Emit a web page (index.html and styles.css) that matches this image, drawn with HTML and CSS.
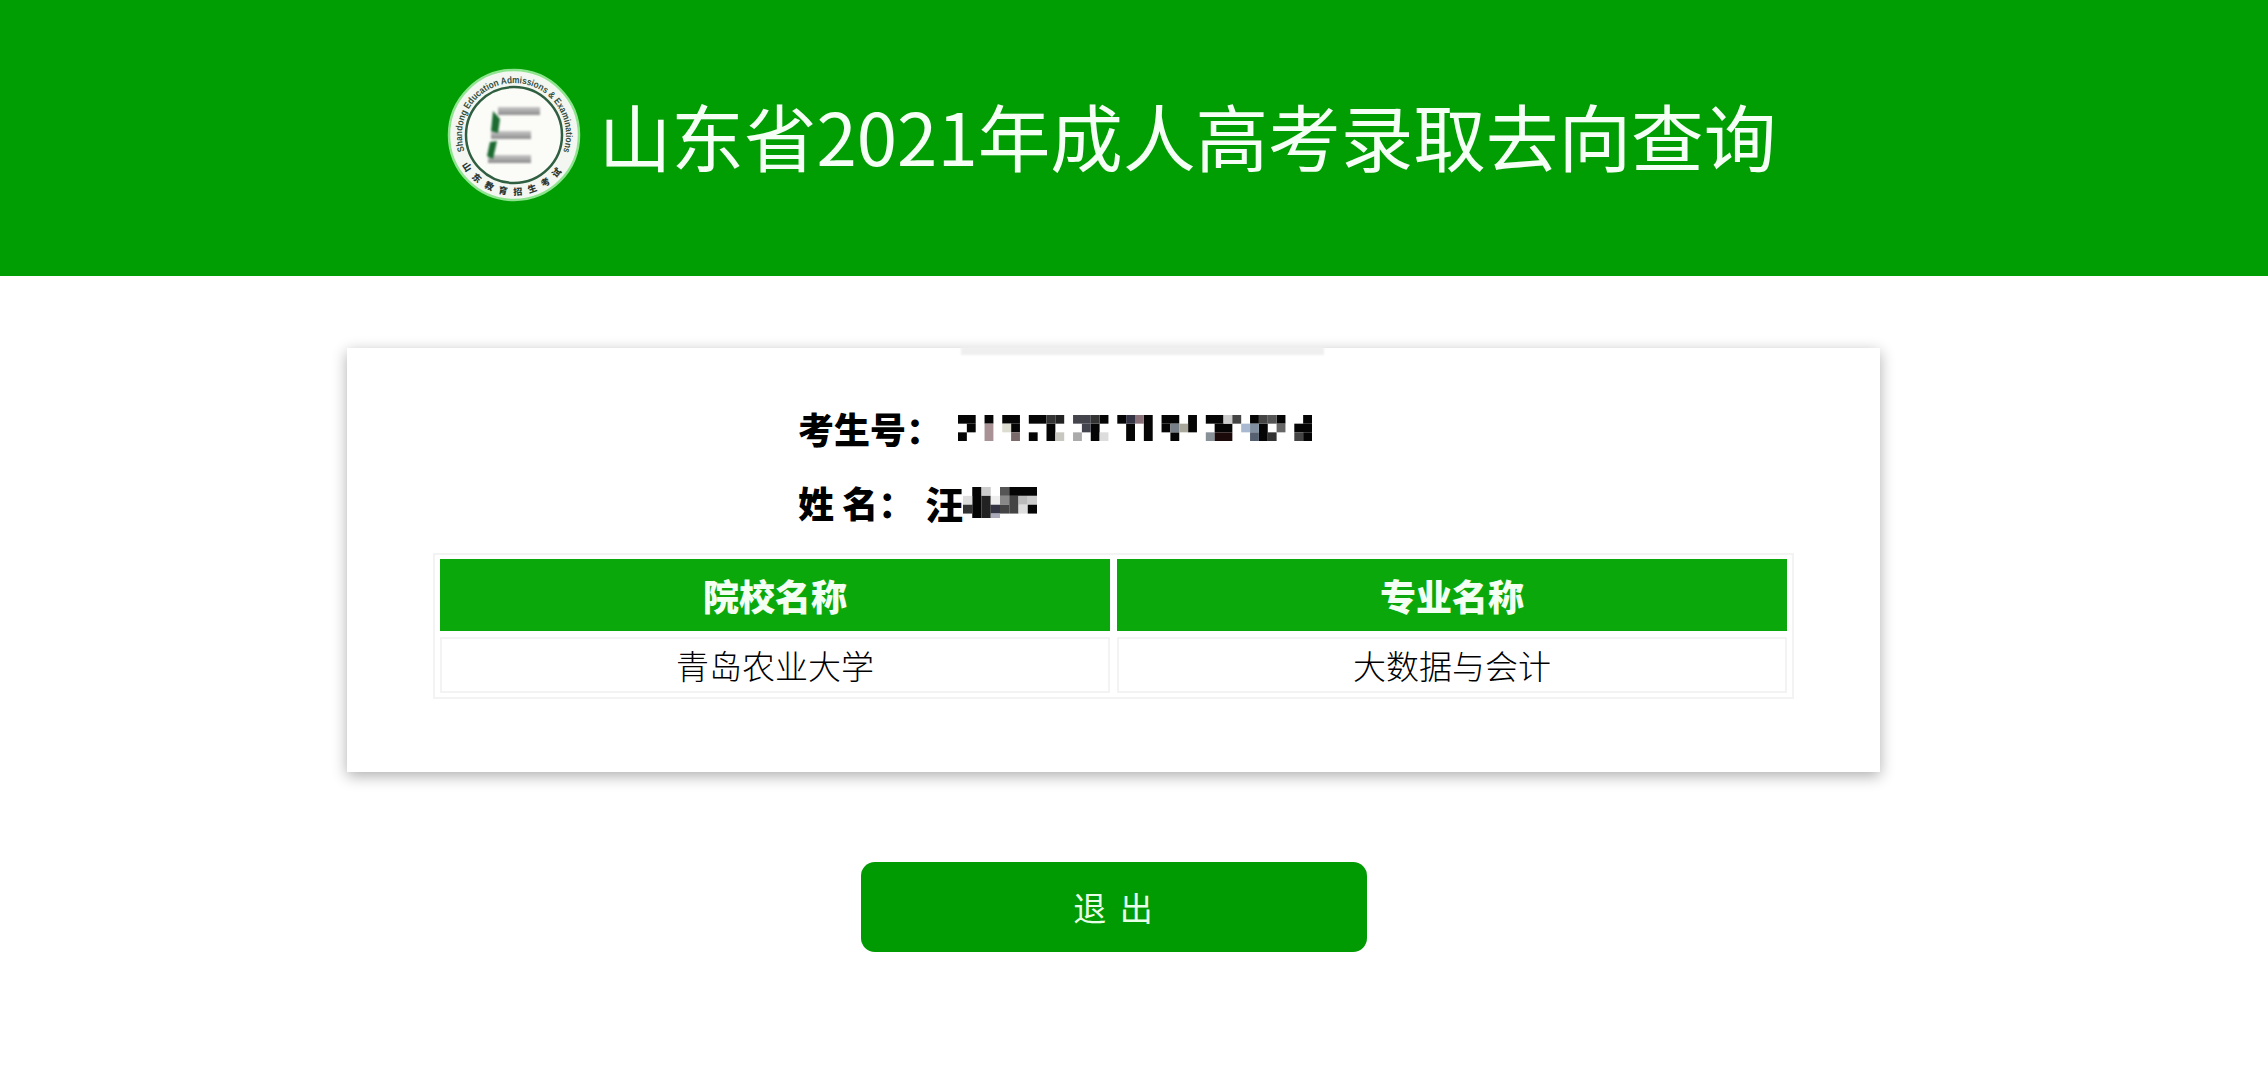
FILE: index.html
```html
<!DOCTYPE html>
<html lang="zh-CN">

<head>
    <meta charset="UTF-8">
    <title>山东省2021年成人高考录取去向查询</title>
    <link rel="stylesheet" href="styles.css">
</head>

<body>
    <header class="banner">
        <svg class="logo" viewBox="0 0 140 142" width="140" height="142">
            <defs>
                <path id="arcTop" d="M 21.5 87 A 52 52 0 1 1 120.5 87"></path>
                <path id="arcBottom" d="M 19 101 A 60 60 0 0 0 123 101"></path>
                <linearGradient id="barGrey" x1="0" y1="0" x2="0" y2="1">
                    <stop offset="0" stop-color="#c8c8c8"></stop>
                    <stop offset="1" stop-color="#8c8c8c"></stop>
                </linearGradient>
            </defs>
            <circle cx="71" cy="71" r="65" fill="#f4f6f2" stroke="#8fe58f" stroke-width="2.5"></circle>
            <circle cx="71" cy="71" r="48" fill="#fbfbf8" stroke="#2f5f40" stroke-width="2.5"></circle>
            <text class="logo-en"><textPath href="#arcTop" textLength="196" lengthAdjust="spacingAndGlyphs">Shandong Education Admissions &amp; Examinations</textPath></text>
            <text class="logo-cn"><textPath href="#arcBottom" textLength="118">山东教育招生考试</textPath></text>
            <g class="logo-e">
                <rect x="55" y="43" width="42" height="8" fill="url(#barGrey)"></rect>
                <rect x="48" y="67" width="40" height="8" fill="url(#barGrey)"></rect>
                <rect x="45" y="91" width="43" height="8" fill="url(#barGrey)"></rect>
                <path d="M50 47 L57 55 L55 69 L48 67 Z" fill="#1c6b30"></path>
                <path d="M47 78 L54 77 L50 95 L44 92 Z" fill="#1c6b30"></path>
            </g>
        </svg>
        <h1 class="title">山东省2021年成人高考录取去向查询</h1>
    </header>

    <main class="content">
        <section class="card">
            <div class="card-tab"></div>
            <div class="info-row">
                <span class="info-label">考生号：</span>
                <svg class="mosaic mosaic-id" viewBox="0 0 40 3" preserveAspectRatio="none">
                    <g fill="#050505">
                        <rect x="0" y="0" width="2" height="1"></rect>
                        <rect x="1" y="1" width="1" height="1"></rect>
                        <rect x="0" y="2" width="1" height="1"></rect>
                        <rect x="3" y="0" width="1" height="1"></rect>
                        <rect x="5" y="0" width="2" height="1"></rect>
                        <rect x="6" y="1" width="1" height="1"></rect>
                        <rect x="8" y="0" width="2" height="1"></rect>
                        <rect x="8" y="2" width="1" height="1"></rect>
                        <rect x="10" y="1" width="1" height="2"></rect>
                        <rect x="16" y="0" width="1" height="1"></rect>
                        <rect x="15" y="1" width="1" height="2"></rect>
                        <rect x="18" y="0" width="1" height="1"></rect>
                        <rect x="19" y="1" width="1" height="2"></rect>
                        <rect x="21" y="0" width="1" height="3"></rect>
                        <rect x="23" y="0" width="2" height="1"></rect>
                        <rect x="23" y="1" width="1" height="1"></rect>
                        <rect x="24" y="2" width="1" height="1"></rect>
                        <rect x="26" y="0" width="1" height="2"></rect>
                        <rect x="28" y="0" width="2" height="1"></rect>
                        <rect x="29" y="1" width="2" height="1"></rect>
                        <rect x="33" y="0" width="1" height="1"></rect>
                        <rect x="34" y="1" width="1" height="2"></rect>
                        <rect x="36" y="0" width="1" height="1"></rect>
                        <rect x="38" y="1" width="2" height="1"></rect>
                        <rect x="39" y="0" width="1" height="1"></rect>
                        <rect x="39" y="2" width="1" height="1"></rect>
                    </g>
                    <rect x="3" y="1" width="1" height="2" fill="#a89295"></rect>
                    <rect x="5" y="1" width="1" height="1" fill="#dcdcd0"></rect>
                    <rect x="6" y="2" width="1" height="1" fill="#7a6a6a"></rect>
                    <rect x="10" y="0" width="1" height="1" fill="#333"></rect>
                    <rect x="11" y="0" width="1" height="1" fill="#222"></rect>
                    <rect x="11" y="2" width="1" height="1" fill="#c8c8c0"></rect>
                    <rect x="13" y="0" width="2" height="1" fill="#44444c"></rect>
                    <rect x="15" y="0" width="1" height="1" fill="#333"></rect>
                    <rect x="14" y="1" width="1" height="1" fill="#44444f"></rect>
                    <rect x="13" y="2" width="1" height="1" fill="#aaa"></rect>
                    <rect x="16" y="2" width="1" height="1" fill="#ddd"></rect>
                    <rect x="19" y="0" width="1" height="1" fill="#334"></rect>
                    <rect x="20" y="0" width="1" height="1" fill="#8a7078"></rect>
                    <rect x="24" y="1" width="1" height="1" fill="#778088"></rect>
                    <rect x="25" y="1" width="1" height="1" fill="#aaa89a"></rect>
                    <rect x="28" y="2" width="1" height="1" fill="#889098"></rect>
                    <rect x="29" y="2" width="2" height="1" fill="#1a0a0a"></rect>
                    <rect x="30" y="0" width="1" height="1" fill="#ccc"></rect>
                    <rect x="31" y="0" width="1" height="1" fill="#444"></rect>
                    <rect x="32" y="1" width="1" height="1" fill="#a8b8d0"></rect>
                    <rect x="33" y="1" width="1" height="1" fill="#8090a0"></rect>
                    <rect x="33" y="2" width="1" height="1" fill="#556070"></rect>
                    <rect x="34" y="0" width="1" height="1" fill="#444"></rect>
                    <rect x="35" y="0" width="1" height="1" fill="#555"></rect>
                    <rect x="35" y="2" width="1" height="1" fill="#333"></rect>
                    <rect x="36" y="1" width="1" height="1" fill="#666"></rect>
                    <rect x="38" y="2" width="1" height="1" fill="#444"></rect>
                </svg>
            </div>
            <div class="info-row">
                <span class="info-label">姓 名：</span>
                <span class="info-value">汪</span>
                <svg class="mosaic mosaic-name" viewBox="0 0 8 3.5" preserveAspectRatio="none">
                    <rect x="1" y="0" width="1" height="3.5" fill="#050505"></rect>
                    <rect x="2" y="0" width="1" height="1" fill="#ccc"></rect>
                    <rect x="4" y="0" width="1" height="1" fill="#555"></rect>
                    <rect x="5" y="0" width="3" height="1" fill="#050505"></rect>
                    <rect x="0" y="1" width="1" height="1" fill="#ddd"></rect>
                    <rect x="2" y="1" width="1" height="2.5" fill="#222"></rect>
                    <rect x="3" y="1" width="1" height="1" fill="#eee"></rect>
                    <rect x="4" y="1" width="1" height="1" fill="#888"></rect>
                    <rect x="5" y="1" width="1" height="2" fill="#444"></rect>
                    <rect x="6" y="1" width="1" height="1" fill="#bbb"></rect>
                    <rect x="7" y="1" width="1" height="1" fill="#ccc"></rect>
                    <rect x="0" y="2" width="1" height="1" fill="#333"></rect>
                    <rect x="3" y="2" width="1" height="1" fill="#334"></rect>
                    <rect x="3" y="3" width="1" height="0.5" fill="#aab"></rect>
                    <rect x="4" y="2" width="1" height="1" fill="#444"></rect>
                    <rect x="6" y="2" width="1" height="1" fill="#ddd"></rect>
                    <rect x="7" y="2" width="1" height="1" fill="#050505"></rect>
                </svg>
            </div>
            <table class="result">
                <thead>
                    <tr>
                        <th>院校名称</th>
                        <th>专业名称</th>
                    </tr>
                </thead>
                <tbody>
                    <tr>
                        <td>青岛农业大学</td>
                        <td>大数据与会计</td>
                    </tr>
                </tbody>
            </table>
        </section>
        <button class="btn-exit" type="button">退 出</button>
    </main>
</body>

</html>
```

FILE: styles.css
```css
* {
    box-sizing: border-box;
}
body {
    margin: 0;
    background-color: #fff;
    font-family: "Noto Sans CJK SC", "Noto Sans", sans-serif;
    color: #000;
}
.banner {
    height: 276px;
    padding: 0 396px 6px 347px;
    display: flex;
    align-items: center;
    justify-content: center;
    gap: 16px;
    background-color: #009e03;
}
.logo {
    flex-shrink: 0;
}
.logo-en {
    font-family: "Liberation Sans", sans-serif;
    font-size: 9.5px;
    font-weight: bold;
    fill: #34503f;
}
.logo-cn {
    font-family: "Noto Sans CJK SC", sans-serif;
    font-size: 9px;
    font-weight: 900;
    fill: #2c3832;
}
.logo-e {
    filter: blur(.8px);
}
.title {
    margin: 0;
    font-size: 72.6px;
    font-weight: 400;
    line-height: 1.2;
    color: #f6fff6;
    white-space: nowrap;
}
.content {
    padding: 72px 388px 0 347px;
    display: flex;
    flex-direction: column;
    align-items: center;
}
.card {
    position: relative;
    width: 1533px;
    padding: 43px 86px 73px;
    background-color: #fff;
    box-shadow: 0 4px 14px rgba(0, 0, 0, .32);
}
.card-tab {
    position: absolute;
    top: -1px;
    left: 614px;
    width: 363px;
    height: 8px;
    background-color: #efefef;
    filter: blur(1px);
}
.info-row {
    height: 74px;
    padding-left: 365px;
    display: flex;
    align-items: center;
    font-size: 36px;
    font-weight: 900;
}
.info-label {
    margin-right: 16px;
}
.info-value {
    margin-left: -5px;
    font-size: 38px;
}
.mosaic {
    display: block;
    filter: blur(.5px);
}
.mosaic-id {
    width: 354px;
    height: 26px;
}
.mosaic-name {
    width: 74px;
    height: 31px;
}
.result {
    width: 100%;
    margin-top: 14px;
    table-layout: fixed;
    border-collapse: separate;
    border-spacing: 7px 6px;
    box-shadow: inset 0 0 0 2px #f3f3f3;
}
.result th {
    height: 72px;
    padding: 0;
    font-size: 36px;
    font-weight: 900;
    color: #f4fff4;
    background-color: #0aa80a;
}
.result td {
    height: 56px;
    padding: 0;
    border: 2px solid #f3f3f3;
    font-size: 33px;
    font-weight: 300;
    text-align: center;
}
.btn-exit {
    width: 506px;
    height: 90px;
    margin-top: 90px;
    padding-left: 8px;
    border: none;
    border-radius: 14px;
    font-family: inherit;
    font-size: 33px;
    letter-spacing: 3px;
    color: #e8ffe8;
    background-color: #009a03;
}
```
